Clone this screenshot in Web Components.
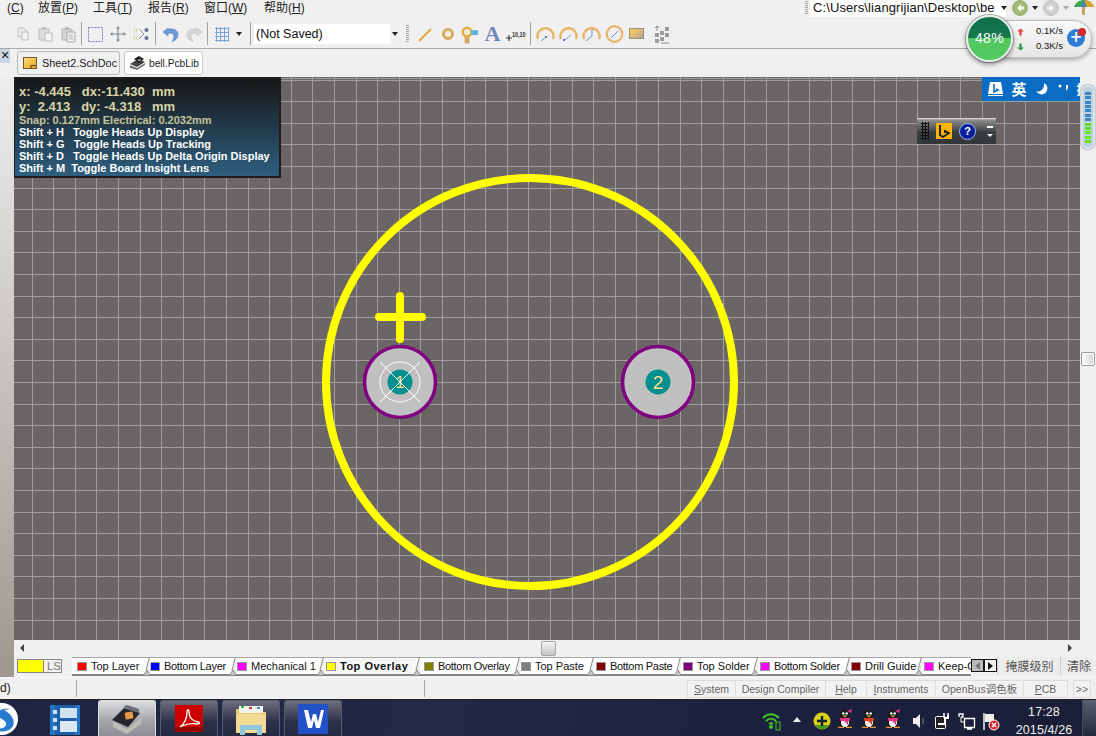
<!DOCTYPE html>
<html>
<head>
<meta charset="utf-8">
<title>bell.PcbLib</title>
<style>
  html, body { margin: 0; padding: 0; height: 736px; overflow: hidden; background: #f0f0f0; }
  body { width: 1096px; position: relative; font-family: "Liberation Sans", "Noto Sans CJK SC", sans-serif; }
</style>
</head>
<body>
<ad-menubar>
  <menu-item w="38"><span style="margin-left:7px">(<u>C</u>)</span></menu-item>
  <menu-item w="55">放置(<u>P</u>)</menu-item>
  <menu-item w="55">工具(<u>T</u>)</menu-item>
  <menu-item w="56">报告(<u>R</u>)</menu-item>
  <menu-item w="60">窗口(<u>W</u>)</menu-item>
  <menu-item w="60">帮助(<u>H</u>)</menu-item>
</ad-menubar>
<ad-toolbar></ad-toolbar>
<doc-tabs>
  <doc-tab icon="sch" w="103">Sheet2.SchDoc</doc-tab>
  <doc-tab icon="lib" w="79" active>bell.PcbLib</doc-tab>
</doc-tabs>
<pcb-workspace></pcb-workspace>
<layer-bar></layer-bar>
<status-bar></status-bar>
<win-taskbar></win-taskbar>
<net-gauge></net-gauge>
<script>
const FONT = '"Liberation Sans", "Noto Sans CJK SC", sans-serif';

class AdMenubar extends HTMLElement {
  constructor() {
    super();
    this.attachShadow({ mode: "open" });
    this.shadowRoot.innerHTML = `
      <style>
        :host { display: flex; height: 18px; background: #f0f0f0; color: #222; font: 12px/16px ${FONT}; overflow: hidden; }
      </style>
      <slot></slot>`;
  }
}
customElements.define("ad-menubar", AdMenubar);

class MenuItem extends HTMLElement {
  constructor() {
    super();
    this.attachShadow({ mode: "open" });
    this.shadowRoot.innerHTML = `
      <style>
        :host { display: block; white-space: nowrap; }
      </style>
      <slot></slot>`;
  }
  connectedCallback() {
    this.style.width = this.getAttribute("w") + "px";
  }
}
customElements.define("menu-item", MenuItem);

// 20x20 toolbar icons
const TB_ICONS = {
  copy: `<path d="M5 4h6l3 3v6H5z" fill="#e8e8e8" stroke="#c4c4c4"/><path d="M9 8h6v8H9z" fill="#f2f2f2" stroke="#bdbdbd"/>`,
  paste: `<path d="M3 5h10v11H3z" fill="#dcdcdc" stroke="#bcbcbc"/><path d="M6 3h4v3H6z" fill="#c4c4c4"/><path d="M9 9h7v8H9z" fill="#f4f4f4" stroke="#bdbdbd"/>`,
  paste2: `<path d="M3 5h10v11H3z" fill="#d4d4d4" stroke="#b4b4b4"/><path d="M6 3h4v3H6z" fill="#bbb"/><path d="M8 8h8v10H8z" fill="#f0f0f0" stroke="#aaa"/><path d="M10 11h4M10 13h4M10 15h4" stroke="#bbb"/>`,
  select: `<rect x="3.500" y="3.500" width="14" height="14" fill="none" stroke="#7a86a8" stroke-dasharray="2 1"/>`,
  move: `<path d="M10 3v14M3 10h14" stroke="#7d8794" stroke-width="1.200"/><path d="M10 2l-2 2.500h4zM10 18l-2-2.500h4zM2 10l2.500-2v4zM18 10l-2.500-2v4z" fill="#7d8794"/>`,
  arrange: `<path d="M3 5h3v3H3zM3 13h3v3H3z" fill="#f5efc4" stroke="#cfc685" stroke-dasharray="1 1"/><path d="M8 5l5 5-5 5" fill="none" stroke="#8d97a8"/><circle cx="15.500" cy="6" r="2" fill="#68738a"/><circle cx="15.500" cy="14" r="2" fill="#68738a"/>`,
  undo: `<path d="M7 4 2 8l5 4V9.500c4-1 6 0 6 3 0 2-1 3-2 5 4-1 6-4 6-7 0-5-5-6-10-5.500z" fill="#6d9ad6" stroke="#4f7fc0" stroke-width=".6"/>`,
  redo: `<path d="M13 4l5 4-5 4V9.500c-4-1-6 0-6 3 0 2 1 3 2 5-4-1-6-4-6-7 0-5 5-6 10-5.500z" fill="#d2d6d2" stroke="#bcc0bc" stroke-width=".6"/>`,
  grid: `<path d="M3 4.500h14M3 8.500h14M3 12.500h14M3 16.500h14M4.500 3v15M8.500 3v15M12.500 3v15M16.500 3v15" stroke="#7f9fda" fill="none"/>`,
  line: `<path d="M4 17 16 5" stroke="#e3a93e" stroke-width="2"/>`,
  pad: `<circle cx="10" cy="10" r="4.500" fill="none" stroke="#d6ab5c" stroke-width="3"/><circle cx="10" cy="10" r="1.500" fill="#f1e7c8"/>`,
  via: `<path d="M6 13h5v7H6z" fill="#d8a364"/><circle cx="8.500" cy="8" r="4.500" fill="none" stroke="#e0ae3c" stroke-width="2.600"/><circle cx="8.500" cy="8" r="1.500" fill="#efe4bd"/><path d="M13 6h7v5h-7z" fill="#5bb2de"/>`,
  arc1: `<path d="M3 15A8 8 0 1 1 18 15" fill="none" stroke="#e8b56a" stroke-width="2.400"/><path d="M6 17l5-4" stroke="#6f8fd0"/><rect x="10" y="12" width="2" height="2" fill="#5b7ac0"/>`,
  arc2: `<path d="M3 15A8 8 0 1 1 18 15" fill="none" stroke="#e8b56a" stroke-width="2.400"/><path d="M7 16l6-5" stroke="#6f8fd0"/><rect x="5" y="15" width="2" height="2" fill="#5b7ac0"/>`,
  arc3: `<path d="M3 15A8 8 0 1 1 18 15" fill="none" stroke="#e8b56a" stroke-width="2.400"/><path d="M5 17l6-5V5" stroke="#6f8fd0" fill="none"/>`,
  circ: `<circle cx="10.500" cy="10" r="7.800" fill="none" stroke="#e8b56a" stroke-width="2.200"/><path d="M7 14l7-7" stroke="#6f8fd0"/>`,
  rect: `<defs><linearGradient id="rg" x1="0" y1="0" x2="1" y2="1"><stop offset="0" stop-color="#ffd24a"/><stop offset="1" stop-color="#b89ea0"/></linearGradient></defs><rect x="2.500" y="4.500" width="14" height="10" fill="url(#rg)" stroke="#9b8e88"/>`,
  group: `<path d="M4 9h4v4H4zM4 15h4v4H4zM9 7h4v4H9zM9 13h4v4H9zM14 3h4v4h-4zM14 9h4v4h-4z" fill="#9c9c9c"/><path d="M6 2v5M4 4l2-2 2 2M10 19h8" stroke="#8a8a8a" fill="none"/>`
};

function tbIcon(name, w) {
  return `<span class="ic" style="width:${w || 23}px"><svg width="20" height="20" viewBox="0 0 20 20">${TB_ICONS[name]}</svg></span>`;
}

class AdToolbar extends HTMLElement {
  constructor() {
    super();
    this.attachShadow({ mode: "open" });
    this.shadowRoot.innerHTML = `
      <style>
        :host { display: flex; align-items: center; height: 31px; box-sizing: border-box; padding-top: 1px; border-bottom: 1px solid #a9a9a9; background: #f0f0f0; font: 12.500px ${FONT}; color: #111; }
        .ic { display: inline-flex; justify-content: center; align-items: center; height: 22px; flex: none; }
        .sep { width: 1px; height: 23px; background: #a0a0a0; flex: none; }
        .arrow { width: 0; height: 0; border: 3px solid transparent; border-top: 4px solid #222; border-bottom: 0; flex: none; }
        .combo { width: 146px; height: 20px; background: #fff; display: flex; align-items: center; padding-left: 2px; box-sizing: border-box; flex: none; }
        .combo span { flex: 1; }
        .combo i { width: 10px; height: 20px; background: #f0f0f0; display: flex; align-items: center; justify-content: center; }
        .grip { width: 3px; height: 17px; margin: 0 4px 0 6px; background: repeating-linear-gradient(#a0a0a0 0 1px, transparent 1px 2px); flex: none; }
        .xy { width: 24px; position: relative; height: 20px; flex: none; color: #333; }
        .xy svg { position: absolute; left: 2px; top: 11px; }
        .xy span { position: absolute; left: 8px; top: 6px; font: bold 8px/9px "Liberation Sans", sans-serif; white-space: nowrap; transform: scaleX(.68); transform-origin: 0 0; }
        .a { font: bold 22px/22px "Liberation Serif", serif; color: #6f87bb; width: 23px; text-align: center; flex: none; }
      </style>
      <span style="width:11px;flex:none"></span>
      ${tbIcon("copy")}${tbIcon("paste")}${tbIcon("paste2")}
      <span class="sep" style="margin:0 1px 0 1px"></span>
      ${tbIcon("select")}${tbIcon("move")}${tbIcon("arrange")}
      <span class="sep" style="margin:0 3px 0 3px"></span>
      ${tbIcon("undo")}${tbIcon("redo")}
      <span class="sep" style="margin:0 2px 0 2px"></span>
      ${tbIcon("grid")}
      <span style="width:3px;flex:none"></span><span class="arrow"></span>
      <span class="sep" style="margin:0 3px 0 8px"></span>
      <span class="combo"><span>(Not Saved)</span><i><span class="arrow" style="flex:none"></span></i></span>
      <span class="grip"></span>
      ${tbIcon("line")}${tbIcon("pad")}${tbIcon("via", 19)}
      <span style="width:3px;flex:none"></span>
      <span class="a">A</span>
      <span class="xy"><svg width="6" height="6" viewBox="0 0 6 6"><path d="M3 0v6M0 3h6" stroke="#333" stroke-width="1.200"/></svg><span>10,10</span></span>
      <span class="sep" style="margin:0 2px 0 2px"></span>
      ${tbIcon("arc1")}${tbIcon("arc2")}${tbIcon("arc3")}${tbIcon("circ")}${tbIcon("rect")}${tbIcon("group", 25)}
    `;
  }
}
customElements.define("ad-toolbar", AdToolbar);

class DocTabs extends HTMLElement {
  constructor() {
    super();
    this.attachShadow({ mode: "open" });
    this.shadowRoot.innerHTML = `
      <style>
        :host { display: flex; gap: 4px; height: 28px; box-sizing: border-box; padding: 2px 0 0 17px; background: #f0f0f0; position: relative; }
        .close { position: absolute; left: 0; top: 0; width: 10px; height: 14px; background: #c8d6e4; font: bold 11px/13px "DejaVu Sans", sans-serif; color: #111; text-align: center; overflow: hidden; }
      </style>
      <div class="close">✕</div>
      <slot></slot>`;
  }
}
customElements.define("doc-tabs", DocTabs);

class DocTab extends HTMLElement {
  constructor() {
    super();
    this.attachShadow({ mode: "open" });
    this.shadowRoot.innerHTML = `
      <style>
        :host { display: flex; align-items: center; gap: 5px; height: 24px; box-sizing: border-box; border: 1px solid #b9b9b9; border-radius: 3px; padding-left: 5px; background: #f0f0f0; font: 10.800px ${FONT}; color: #222; white-space: nowrap; overflow: hidden; }
        :host([active]) { background: #fff; border-color: #c8c8c8; padding-left: 4px; gap: 3px; font-size: 10.200px; }
      </style>
      <span id="i" style="display:inline-flex"></span><slot></slot>`;
  }
  connectedCallback() {
    this.style.width = this.getAttribute("w") + "px";
    const kind = this.getAttribute("icon");
    this.shadowRoot.getElementById("i").innerHTML = kind === "sch"
      ? `<svg width="14" height="12" viewBox="0 0 14 12"><defs><linearGradient id="s" x1="0" y1="0" x2="1" y2="1"><stop offset="0" stop-color="#ffe27a"/><stop offset="1" stop-color="#e99f1e"/></linearGradient></defs><rect x=".5" y=".5" width="13" height="11" fill="url(#s)" stroke="#6e5a2e"/><path d="M8 8.500h5M8 8.500v3" stroke="#4a3a14"/></svg>`
      : `<svg width="17" height="16" viewBox="0 0 17 16"><path d="M1 9 9 4l7 3-8 5z" fill="#444"/><path d="M5 4l5-3 5 3-5 4z" fill="#222"/><path d="M1 10v3l7 2 8-5V8l-8 5z" fill="#777"/><path d="M9 4h3v2H9z" fill="#8a8a8a"/></svg>`;
  }
}
customElements.define("doc-tab", DocTab);

class HudPanel extends HTMLElement {
  constructor() {
    super();
    this.attachShadow({ mode: "open" });
    this.shadowRoot.innerHTML = `
      <style>
        :host { position: absolute; left: 0; top: 0; width: 267px; height: 101px; box-sizing: border-box; padding: 5px 0 0 4px; border: 1px solid #1d1d1d; border-width: 2px 2px 2px 1px; background: linear-gradient(#171717, #2e5e7f); font: bold 11px/12px ${FONT}; color: #fff; }
        div { height: 12px; white-space: pre; }
        div.big { height: 15px; font-size: 13px; line-height: 15px; color: #d9d5a8; }
        div.snap { color: #c5c39b; }
      </style>
      <div class="big">x: -4.445   dx:-11.430  mm</div>
      <div class="big">y:  2.413   dy: -4.318   mm</div>
      <div class="snap">Snap: 0.127mm Electrical: 0.2032mm</div>
      <div>Shift + H   Toggle Heads Up Display</div>
      <div>Shift + G   Toggle Heads Up Tracking</div>
      <div>Shift + D   Toggle Heads Up Delta Origin Display</div>
      <div>Shift + M  Toggle Board Insight Lens</div>`;
  }
}
customElements.define("hud-panel", HudPanel);

class PcbCanvas extends HTMLElement {
  constructor() {
    super();
    this.attachShadow({ mode: "open" });
    // page coords minus canvas origin (14,77)
    const W = 1066, H = 563;
    let lines = "";
    for (let i = -1; i < 50; i++) {
      const x = Math.round(658 - 14 + (i - 30) * 21.6);
      if (x >= 0 && x <= W) lines += `M${x + .5} 0V${H}`;
      const y = Math.round(382 - 77 + (i - 14) * 21.6);
      if (y >= 0 && y <= H) lines += `M0 ${y + .5}H${W}`;
    }
    const pad = (x, y, extra) => `
      <circle cx="${x}" cy="${y}" r="35.500" fill="#c0c0c0" stroke="#800080" stroke-width="3.500"/>
      <circle cx="${x}" cy="${y}" r="12.500" fill="#008f8f"/>${extra}`;
    this.shadowRoot.innerHTML = `
      <style>
        :host { display: block; position: relative; width: ${W}px; height: ${H}px; background: #6b6665; overflow: hidden; flex: none; }
        svg { display: block; }
        text { font-family: "Liberation Sans", sans-serif; }
      </style>
      <svg width="${W}" height="${H}" viewBox="0 0 ${W} ${H}">
        <path d="${lines}M0 1.500H${W}" stroke="#a19d9d" stroke-width="1" shape-rendering="crispEdges"/>
        <circle cx="516" cy="305" r="204" fill="none" stroke="#ffff00" stroke-width="8"/>
        <path d="M365 240H408M386 219V262" stroke="#ffff00" stroke-width="8" stroke-linecap="round"/>
        ${pad(386, 305, `<text x="386" y="311" font-size="16" text-anchor="middle" fill="#ffe08a">1</text>
          <circle cx="386" cy="305" r="20" fill="none" stroke="#fff" stroke-width="1"/>
          <path d="M366 285 406 325M406 285 366 325" stroke="#fff" stroke-width="1"/>`)}
        ${pad(644, 305, `<text x="644" y="312" font-size="19" text-anchor="middle" fill="#ffe08a">2</text>`)}
      </svg>
      <hud-panel></hud-panel>
      <slot></slot>`;
  }
}
customElements.define("pcb-canvas", PcbCanvas);

class FloatBar extends HTMLElement {
  constructor() {
    super();
    this.attachShadow({ mode: "open" });
    this.shadowRoot.innerHTML = `
      <style>
        :host { position: absolute; left: 903px; top: 41px; width: 79px; height: 26px; display: flex; align-items: center; background: linear-gradient(#e8e8e8 0, #8d8d8d 2px, #3a3d3f 55%, #333638); }
        .dots { width: 8px; height: 18px; margin-left: 4px; background: radial-gradient(circle, #111 1px, transparent 1.3px) 0 0 / 3px 3px; }
        .b { width: 16px; height: 16px; background: #ffb400; margin-left: 7px; display: flex; align-items: center; justify-content: center; }
        .q { width: 15px; height: 15px; border-radius: 50%; background: #0a1e9e; border: 1px solid #9fc0e6; color: #fff; font: bold 11px/15px "Liberation Sans"; text-align: center; margin-left: 7px; }
        .m { margin-left: 11px; width: 6px; display: flex; flex-direction: column; gap: 6px; align-items: center; }
        .m i { display: block; width: 6px; height: 2px; background: #fff; }
        .m u { display: block; width: 0; height: 0; border: 3px solid transparent; border-top: 3px solid #fff; border-bottom: 0; }
      </style>
      <div class="dots"></div>
      <div class="b"><svg width="12" height="13" viewBox="0 0 12 13"><path d="M2 0v10l3 2 6-4-4-2v2" fill="none" stroke="#222" stroke-width="2"/></svg></div>
      <div class="q">?</div>
      <div class="m"><i></i><u></u></div>`;
  }
}
customElements.define("float-bar", FloatBar);

class ImeBar extends HTMLElement {
  constructor() {
    super();
    this.attachShadow({ mode: "open" });
    this.shadowRoot.innerHTML = `
      <style>
        :host { position: absolute; right: -16px; top: 0; width: 114px; height: 24px; background: #0a6cc4; color: #fff; display: flex; align-items: center; font: bold 15px/24px "Noto Sans CJK SC", sans-serif; overflow: hidden; z-index: 1; }
        span { display: inline-flex; align-items: center; justify-content: center; flex: none; }
      </style>
      <span style="width:22px;margin-left:3px"><svg width="18" height="16" viewBox="0 0 18 16"><path d="M1 13 3 1h11l2 12z" fill="#fff"/><path d="M7 3v8l4-2-2-1" fill="none" stroke="#0a6cc4" stroke-width="1.600"/><path d="M1 14.500h15" stroke="#fff"/></svg></span>
      <span style="width:22px;margin-left:1px">英</span>
      <span style="width:22px;margin-left:1px"><svg width="14" height="14" viewBox="0 0 14 14"><path d="M9 1a6 6 0 1 1-8 8c4 2 9-2 8-8z" fill="#fff"/></svg></span>
      <span style="width:18px;margin-left:2px"><svg width="12" height="12" viewBox="0 0 12 12"><circle cx="2" cy="3" r="1.500" fill="#fff"/><path d="M8 2h2v3l-2 3z" fill="#fff"/></svg></span>
      <span style="width:20px;font-size:13px">拼</span>`;
  }
}
customElements.define("ime-bar", ImeBar);

class VScroll extends HTMLElement {
  constructor() {
    super();
    this.attachShadow({ mode: "open" });
    this.shadowRoot.innerHTML = `
      <style>
        :host { display: flex; flex-direction: column; align-items: center; width: 16px; height: 563px; background: #f0f0f0; position: relative; flex: none; }
        .thumb { margin-top: 275px; width: 14px; height: 14px; box-sizing: border-box; border: 1px solid #9a9a9a; border-radius: 2px; background: linear-gradient(90deg, #fafafa, #d4d4d4); box-shadow: inset 0 0 0 1px #fff; }
      </style>
      <div class="thumb"></div>`;
  }
}
customElements.define("v-scroll", VScroll);

class LevelMeter extends HTMLElement {
  constructor() {
    super();
    this.attachShadow({ mode: "open" });
    let bars = "";
    for (let i = 0; i < 12; i++) bars += `<i style="background:${i < 7 ? "#3f86c4" : "#66e21a"}"></i>`;
    this.shadowRoot.innerHTML = `
      <style>
        :host { position: absolute; left: 1081px; top: 85px; width: 14px; height: 64px; box-sizing: border-box; background: #bdd0e0; border-radius: 6px; border: 2px solid #d8e4ec; padding: 5px 2px 4px; display: flex; flex-direction: column; justify-content: space-between; overflow: hidden; box-shadow: 0 0 2px #667; }
        i { display: block; height: 3px; flex: none; }
      </style>${bars}`;
  }
}
customElements.define("level-meter", LevelMeter);

class PcbWorkspace extends HTMLElement {
  constructor() {
    super();
    this.attachShadow({ mode: "open" });
    this.shadowRoot.innerHTML = `
      <style>
        :host { display: block; }
        .row { display: flex; height: 563px; }
        .strip { width: 14px; flex: none; }
        .h { display: flex; align-items: center; height: 16px; margin-left: 14px; background: #f0f0f0; position: relative; }
        .tri { width: 0; height: 0; border: 4px solid transparent; flex: none; }
        .l { border-right: 4px solid #444; border-left: 0; margin-left: 6px; }
        .r { border-left: 4px solid #444; border-right: 0; margin-left: 512px; }
        .th { width: 15px; height: 15px; box-sizing: border-box; margin-left: 517px; border: 1px solid #a4a4a4; border-radius: 2px; background: linear-gradient(#f6f6f6, #c4c4c4); flex: none; }
      </style>
      <div class="row">
        <div class="strip"></div>
        <pcb-canvas><float-bar></float-bar><ime-bar></ime-bar></pcb-canvas>
        <v-scroll></v-scroll>
      </div>
      <div class="h"><span class="tri l"></span><span class="th"></span><span class="tri r"></span></div>`;
  }
}
customElements.define("pcb-workspace", PcbWorkspace);

class LayerTab extends HTMLElement {
  constructor() {
    super();
    this.attachShadow({ mode: "open" });
    this.shadowRoot.innerHTML = `
      <style>
        :host { display: flex; align-items: center; flex: none; height: 19px; box-sizing: border-box; border-top: 1px solid #a8a8a8; border-bottom: 2px solid #868686; background: #fff; font: 11px/16px ${FONT}; color: #111; white-space: nowrap; position: relative; }
        :host([bold]) { font-weight: bold; background: #f6f6f6; letter-spacing: .5px; }
        .sw { width: 10px; height: 9px; border: 1px solid #999; box-sizing: border-box; margin-right: 4px; flex: none; }
        svg { position: absolute; right: -5px; top: -1px; z-index: 2; }
      </style>
      <span class="sw"></span><slot></slot>
      <svg width="8" height="19" viewBox="0 0 8 19"><path d="M8 0 3 13 0 18h7z" fill="#f0f0f0"/><path d="M6.500 0 3 13M.5 18 4 13l3 5" fill="#c8c8c8" stroke="#8a8a8a"/></svg>`;
  }
  connectedCallback() {
    this.style.width = this.getAttribute("w") + "px";
    this.style.paddingLeft = (this.getAttribute("pad") || 6) + "px";
    this.shadowRoot.querySelector(".sw").style.background = this.getAttribute("c");
    if (this.textContent.startsWith("Bottom")) this.style.letterSpacing = "-.3px";
  }
}
customElements.define("layer-tab", LayerTab);

class LayerBar extends HTMLElement {
  constructor() {
    super();
    this.attachShadow({ mode: "open" });
    this.shadowRoot.innerHTML = `
      <style>
        :host { display: flex; height: 21px; margin-left: 14px; padding-top: 1px; box-sizing: border-box; font: 12px ${FONT}; color: #555; background: #f0f0f0; position: relative; }
        .ls { display: flex; width: 45px; height: 14px; margin: 2px 10px 0 3px; border: 1px solid #888; box-sizing: border-box; flex: none; font-size: 11.500px; line-height: 13px; color: #777; }
        .ls i { display: block; width: 25px; background: #ff0; border-right: 1px solid #888; margin-right: 3px; }
        .tabs { display: flex; overflow: hidden; width: 899px; flex: none; }
        .nav { position: absolute; left: 957px; top: 3px; width: 26px; height: 13px; display: flex; }
        .nav b { width: 13px; height: 13px; border: 1px solid #111; box-sizing: border-box; background: #f0f0f0; display: flex; align-items: center; justify-content: center; }
        .nav b:first-child { background: #bbb; }
        .nav u { width: 0; height: 0; border: 4px solid transparent; border-left: 5px solid #111; border-right: 0; }
        .nav b:first-child u { border-left: 0; border-right: 5px solid #777; }
        .btn { position: absolute; top: 1px; height: 18px; border-left: 1px solid #ccc; font: 12px/18px "Noto Sans CJK SC", sans-serif; color: #555; text-align: center; background: #ececec; }
      </style>
      <div class="ls"><i></i>LS</div>
      <div class="tabs">
        <layer-tab w="74" pad="5" c="#ff0000">Top Layer</layer-tab>
        <layer-tab w="86" pad="4" c="#0000ff">Bottom Layer</layer-tab>
        <layer-tab w="88" pad="5" c="#ff00ff">Mechanical 1</layer-tab>
        <layer-tab w="96" pad="6" c="#ffff00" bold>Top Overlay</layer-tab>
        <layer-tab w="100" pad="8" c="#808000">Bottom Overlay</layer-tab>
        <layer-tab w="74" pad="5" c="#808080">Top Paste</layer-tab>
        <layer-tab w="87" pad="6" c="#800000">Bottom Paste</layer-tab>
        <layer-tab w="77" pad="6" c="#800080">Top Solder</layer-tab>
        <layer-tab w="92" pad="6" c="#ff00ff">Bottom Solder</layer-tab>
        <layer-tab w="72" pad="5" c="#800000">Drill Guide</layer-tab>
        <layer-tab w="62" pad="6" c="#ff00ff">Keep-Out</layer-tab>
      </div>
      <div class="nav"><b><u></u></b><b><u></u></b></div>
      <div class="btn" style="left:983px;width:63px">掩膜级别</div>
      <div class="btn" style="left:1046px;width:36px">清除</div>`;
  }
}
customElements.define("layer-bar", LayerBar);

class StatusBar extends HTMLElement {
  constructor() {
    super();
    this.attachShadow({ mode: "open" });
    const btn = (t, w) => `<span class="b" style="width:${w}px">${t}</span>`;
    this.shadowRoot.innerHTML = `
      <style>
        :host { display: flex; align-items: center; height: 23px; box-sizing: border-box; border-top: 1px solid #f8f8f8; border-bottom: 1px solid #222; background: #f0f0f0; font: 12px ${FONT}; color: #222; position: relative; }
        .t { width: 77px; box-sizing: border-box; height: 17px; line-height: 17px; border-right: 1px solid #a8a8a8; flex: none; }
        .m { width: 348px; height: 17px; border-right: 1px solid #a8a8a8; box-sizing: border-box; flex: none; }
        .r { margin-left: auto; display: flex; padding-right: 5px; }
        .b { box-sizing: border-box; height: 18px; line-height: 17px; text-align: center; border: 1px solid #dcdcdc; border-right-width: 0; color: #666; background: #f2f2f2; white-space: nowrap; font-size: 10.500px; }
        .sp { width: 5px; border-left: 1px solid #dcdcdc; }
      </style>
      <div class="t">d)</div><div class="m"></div>
      <div class="r">
        ${btn("<u>S</u>ystem", 48)}${btn("Design Compiler", 90)}${btn("<u>H</u>elp", 41)}${btn("<u>I</u>nstruments", 69)}${btn("OpenBus调色板", 88)}${btn("<u>P</u>CB", 44)}
        <span class="sp"></span>${btn("&gt;&gt;", 17)}<span style="border-left:1px solid #dcdcdc"></span>
      </div>`;
  }
}
customElements.define("status-bar", StatusBar);

class TaskBtn extends HTMLElement {
  constructor() {
    super();
    this.attachShadow({ mode: "open" });
    this.shadowRoot.innerHTML = `
      <style>
        :host { display: flex; align-items: center; justify-content: center; width: 58px; height: 36px; box-sizing: border-box; margin-right: 4px; border: 1px solid #555b70; border-bottom: 0; border-radius: 3px 3px 0 0; background: linear-gradient(#6d6f7d, #2c3048 60%, #262a40); flex: none; overflow: hidden; }
        :host([active]) { background: linear-gradient(#dcdde0, #a6a7ab 55%, #8d8e96); border-color: #ddd; }
      </style><slot></slot>`;
  }
}
customElements.define("task-btn", TaskBtn);

class WinTaskbar extends HTMLElement {
  constructor() {
    super();
    this.attachShadow({ mode: "open" });
    const qq = (x, scarf, bow) => `<svg class="qq" style="left:${x}px" width="16" height="19" viewBox="0 0 16 19">
      <ellipse cx="8" cy="6" rx="5" ry="5.500" fill="#1b1b1b"/><ellipse cx="8" cy="13" rx="6" ry="5" fill="#1b1b1b"/><ellipse cx="8" cy="13.500" rx="4" ry="4.500" fill="#f4f4f4"/>
      <circle cx="6.300" cy="4.500" r="1.200" fill="#fff"/><circle cx="9.700" cy="4.500" r="1.200" fill="#fff"/><path d="M5.500 6.500h5L8 8.500z" fill="#f4b020"/>
      <path d="M3 9h10v2.500l-2 .5v4l-3-3.500L5 12 3 11.500z" fill="${scarf}"/><path d="M1 18.500h6M9 18.500h6" stroke="#f49a20" stroke-width="1.500"/>
      ${bow ? `<path d="M10 2l5-2-1 4z" fill="${scarf}"/>` : ""}</svg>`;
    this.shadowRoot.innerHTML = `
      <style>
        :host { display: flex; align-items: flex-start; height: 36px; background: linear-gradient(100deg, #1e2340, #232846 40%, #1c2140 70%, #1a1e36); position: relative; overflow: hidden; color: #fff; font: 12px ${FONT}; }
        .start { width: 98px; height: 36px; position: relative; flex: none; }
        .tray svg { position: absolute; }
        .clock { position: absolute; left: 1008px; top: 3px; width: 72px; text-align: center; font: 12.500px/18px ${FONT}; color: #f0f0f0; letter-spacing: .1px; }
        .desk { position: absolute; right: 0; top: 0; width: 14px; height: 36px; box-sizing: border-box; border-left: 1px solid #444a5c; background: linear-gradient(#5b6070, #23283a); }
        .tray svg.qq { top: 9px; }
      </style>
      <div class="start">
        <svg style="position:absolute;left:-14px;top:3px" width="33" height="33" viewBox="0 0 33 33"><circle cx="16" cy="16" r="16" fill="#fff"/><path d="M24 6C12 4 8 12 16 16s4 12-9 9c10 8 24 1 20-9S12 8 24 6z" fill="#2a7ad0"/></svg>
        <svg style="position:absolute;left:50px;top:5px" width="30" height="30" viewBox="0 0 30 30"><rect width="30" height="30" fill="#1c5fa8"/><path d="M0 0h5v30H0zM25 0h5v30h-5z" fill="#2675c4"/><path d="M3 5h4v4H3zM3 13h4v4H3zM3 21h4v4H3z" fill="#cfe2f4"/><rect x="10" y="3" width="17" height="10" fill="#cfe0f0"/><rect x="10" y="16" width="17" height="11" fill="#dbe7f2"/></svg>
      </div>
      <task-btn active><svg width="34" height="30" viewBox="0 0 34 30"><path d="M3 17 17 25 31 14 31 20 17 30 3 23z" fill="#bdbdb6"/><path d="M2 16 14 4 30 9 18 23z" fill="#24262c"/><path d="M13 3l4-2 12 4v4z" fill="#6b6f78"/><rect x="15" y="8" width="8" height="7" rx="1" fill="#e5964a" transform="rotate(-10 19 11)"/></svg></task-btn>
      <task-btn><svg width="28" height="28" viewBox="0 0 28 28"><rect width="28" height="27" fill="#cc0000"/><rect y="22" width="28" height="5" fill="#900"/><path d="M5 22c4-3 7-9 7-15 0-3 2-3 2 0 0 6 4 9 9 10 2 0 2 2 0 2-6-1-12 0-16 2z" fill="none" stroke="#fff" stroke-width="1.300"/></svg></task-btn>
      <task-btn><svg width="32" height="32" viewBox="0 0 32 32"><path d="M1 6h12l2 3h16v21H1z" fill="#e8c868"/><path d="M4 3h24v7H4z" fill="#f4f4ec"/><path d="M6 3h3v2H6z" fill="#3ab24a"/><path d="M14 4h3v2h-3z" fill="#c83a2a"/><path d="M22 4h3v2h-3z" fill="#3a8ed0"/><path d="M1 11h30v19H1z" fill="#f2dc94"/><path d="M5 32V22h22v10h-5v-5H10v5z" fill="#8ec6dc"/></svg></task-btn>
      <task-btn><svg width="30" height="30" viewBox="0 0 30 30"><rect width="30" height="30" fill="#2352c6"/><path d="M6 6h4l3 12 2-8h3l2 8 3-12h3l-4 18h-4l-2-8-2 8h-4z" fill="#fff"/></svg></task-btn>
      <div class="tray">
        <svg style="left:762px;top:11px" width="20" height="20" viewBox="0 0 20 20"><path d="M1 7c5-5 11-5 16 0M4 10c3-3 7-3 10 0M7 13c1.500-1 2.500-1 4 0" fill="none" stroke="#3fc81e" stroke-width="2"/><circle cx="9" cy="16" r="2" fill="#3fc81e"/><rect x="14" y="11" width="4" height="8" fill="none" stroke="#3fc81e"/></svg>
        <svg style="left:793px;top:17px" width="8" height="5" viewBox="0 0 8 5"><path d="M0 5 4 0l4 5z" fill="#eee"/></svg>
        <svg style="left:813px;top:12px" width="18" height="18" viewBox="0 0 18 18"><circle cx="9" cy="9" r="8.500" fill="#d8cf18"/><path d="M2 13A8 8 0 0 0 16 13z" fill="#4a9a20"/><path d="M9 4v10M4 9h10" stroke="#123" stroke-width="2.400"/></svg>
        ${qq(837, "#e0358c", true)}${qq(861, "#d8402a", false)}${qq(885, "#e0358c", true)}
        <svg style="left:912px;top:13px" width="14" height="16" viewBox="0 0 14 16"><path d="M1 5h3l4-4v14l-4-4H1z" fill="#eee"/><path d="M10.500 5c1 2 1 4 0 6" stroke="#888" fill="none"/></svg>
        <svg style="left:934px;top:12px" width="16" height="18" viewBox="0 0 16 18"><rect x="1.500" y="4.500" width="10" height="12" rx="1" fill="#222" stroke="#fff"/><path d="M4 12h7V6h3V3" fill="none" stroke="#fff" stroke-width="2"/><path d="M10 1v5M14 1v5" stroke="#fff" stroke-width="1.500"/></svg>
        <svg style="left:958px;top:12px" width="18" height="18" viewBox="0 0 18 18"><path d="M3 5h2V2H1v3M6.500 6.500h10v9h-10zM9 17h5" fill="none" stroke="#fff" stroke-width="1.300"/><path d="M3 5v5h3" fill="none" stroke="#fff"/></svg>
        <svg style="left:982px;top:12px" width="18" height="19" viewBox="0 0 18 19"><path d="M2 1v17" stroke="#fff" stroke-width="1.400"/><path d="M3 2h9v8H3z" fill="#eee"/><circle cx="12" cy="13" r="5" fill="#d8272a" stroke="#fff"/><path d="M10 11l4 4M14 11l-4 4" stroke="#fff" stroke-width="1.300"/></svg>
      </div>
      <div class="clock">17:28<br>2015/4/26</div>
      <div class="desk"></div>`;
  }
}
customElements.define("win-taskbar", WinTaskbar);

class NetGauge extends HTMLElement {
  constructor() {
    super();
    this.attachShadow({ mode: "open" });
    this.shadowRoot.innerHTML = `
      <style>
        :host { position: absolute; left: 0; top: 0; width: 1096px; height: 78px; pointer-events: none; font: 12px ${FONT}; color: #111; display: block; }
        .addr { position: absolute; left: 810px; top: 0; width: 196px; height: 17px; background: #fff; overflow: hidden; font-size: 13px; line-height: 16px; padding-left: 3px; box-sizing: border-box; white-space: nowrap; letter-spacing: .1px; }
        .ar { position: absolute; width: 0; height: 0; border: 3px solid transparent; border-top: 4px solid #222; border-bottom: 0; top: 6px; }
        .grip { position: absolute; left: 805px; top: 1px; width: 3px; height: 14px; background: repeating-linear-gradient(#a0a0a0 0 1px, transparent 1px 2px); }
        .nav { position: absolute; top: 0; width: 16px; height: 16px; border-radius: 50%; }
        .pill { position: absolute; left: 985px; top: 20px; width: 107px; height: 38px; border-radius: 19px; background: linear-gradient(#f8f8f8, #e6e6e6); border: 1px solid #bdbdbd; box-sizing: border-box; box-shadow: 0 2px 4px rgba(0,0,0,.3); }
        .ball { position: absolute; left: 966px; top: 15px; width: 47px; height: 47px; border-radius: 50%; box-sizing: border-box; border: 2px solid #e8ecea; box-shadow: 0 2px 5px rgba(0,0,0,.5), 0 0 0 1px #b5b5b5; background: linear-gradient(#0e6d4a 0, #177a50 48%, #52c95f 48%, #52c95f 100%); color: #fff; text-align: center; font: 14px/43px ${FONT}; letter-spacing: .3px; }
        .sp { position: absolute; left: 1036px; font-size: 9.500px; line-height: 12px; white-space: nowrap; color: #111; }
        .up, .dn { position: absolute; left: 1017px; }
        .plus { position: absolute; left: 1067px; top: 29px; width: 18px; height: 18px; border-radius: 50%; background: #2d7bd4; color: #fff; font: bold 15px/17px "DejaVu Sans"; text-align: center; }
        .dot { position: absolute; left: 1078px; top: 28px; width: 8px; height: 8px; border-radius: 50%; background: #d8272a; }
      </style>
      <div class="grip"></div>
      <div class="addr">C:\\Users\\liangrijian\\Desktop\\be</div>
      <span class="ar" style="left:1001px"></span>
      <svg class="nav" style="left:1012px" viewBox="0 0 16 16"><circle cx="8" cy="8" r="7.500" fill="#a0b878" stroke="#8aa066"/><path d="M9 4 5 8l4 4V9.500h3v-3H9z" fill="#f4f8ec"/></svg>
      <span class="ar" style="left:1032px"></span>
      <svg class="nav" style="left:1043px" viewBox="0 0 16 16"><circle cx="8" cy="8" r="7.500" fill="#cfcfcf" stroke="#bbb"/><path d="M7 4l4 4-4 4V9.500H4v-3h3z" fill="#f4f4f4"/></svg>
      <span class="ar" style="left:1063px;border-top-color:#aaa"></span>
      <svg style="position:absolute;left:1074px;top:0" width="20" height="15" viewBox="0 0 20 15"><path d="M0 7C2 1 7 0 10 0s8 1 10 7z" fill="#3da84a"/><path d="M10 0c3 0 8 1 10 7h-7z" fill="#e0a030"/><path d="M10 0 6 7h6z" fill="#3d86c8"/><path d="M8 7h3v8H8z" fill="#c9a060"/></svg>
      <div class="pill"></div>
      <div class="ball">48%</div>
      <svg class="up" style="top:28px" width="7" height="8" viewBox="0 0 9 9"><path d="M4.500 0 9 4H6v5H3V4H0z" fill="#d9493c"/></svg>
      <svg class="dn" style="top:43px" width="7" height="8" viewBox="0 0 9 9"><path d="M4.500 9 9 5H6V0H3v5H0z" fill="#2f9a4a"/></svg>
      <div class="sp" style="top:25px">0.1K/s</div>
      <div class="sp" style="top:40px">0.3K/s</div>
      <div class="plus">+</div>
      <div class="dot"></div>
      <level-meter></level-meter>`;
  }
}
customElements.define("net-gauge", NetGauge);

// left strip shading runs the whole height of the workspace
document.body.style.backgroundImage = "linear-gradient(#f0f0f0 0, #f0f0f0 60px, #9e988f 677px)";
document.body.style.backgroundSize = "14px 677px";
document.body.style.backgroundRepeat = "no-repeat";
</script>
</body>
</html>
